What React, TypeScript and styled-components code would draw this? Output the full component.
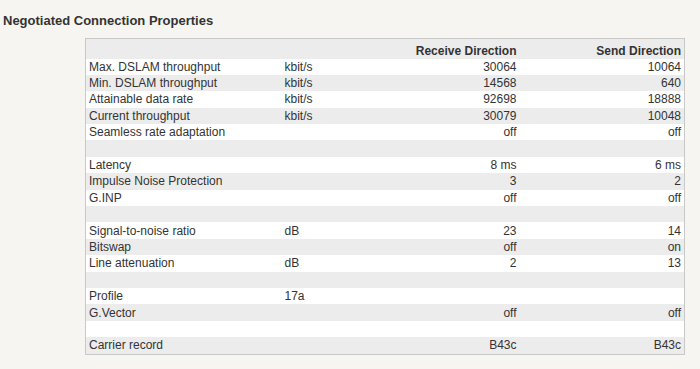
import React from 'react';
import styled, { createGlobalStyle } from 'styled-components';

const GlobalStyle = createGlobalStyle`
  html, body {
    margin: 0;
    padding: 0;
    background: #f6f5f1;
  }
  body {
    font-family: "Liberation Sans", Arial, sans-serif;
    color: #333;
  }
`;

type Row = {
  label?: string;
  unit?: string;
  receive?: string;
  send?: string;
};

const rows: Row[] = [
  { label: 'Max. DSLAM throughput', unit: 'kbit/s', receive: '30064', send: '10064' },
  { label: 'Min. DSLAM throughput', unit: 'kbit/s', receive: '14568', send: '640' },
  { label: 'Attainable data rate', unit: 'kbit/s', receive: '92698', send: '18888' },
  { label: 'Current throughput', unit: 'kbit/s', receive: '30079', send: '10048' },
  { label: 'Seamless rate adaptation', receive: 'off', send: 'off' },
  {},
  { label: 'Latency', receive: '8 ms', send: '6 ms' },
  { label: 'Impulse Noise Protection', receive: '3', send: '2' },
  { label: 'G.INP', receive: 'off', send: 'off' },
  {},
  { label: 'Signal-to-noise ratio', unit: 'dB', receive: '23', send: '14' },
  { label: 'Bitswap', receive: 'off', send: 'on' },
  { label: 'Line attenuation', unit: 'dB', receive: '2', send: '13' },
  {},
  { label: 'Profile', unit: '17a' },
  { label: 'G.Vector', receive: 'off', send: 'off' },
  {},
  { label: 'Carrier record', receive: 'B43c', send: 'B43c' },
];

const App = () => {
  return (
    <>
      <GlobalStyle />
      <Page>
        <Title>Negotiated Connection Properties</Title>
        <Table>
          <colgroup>
            <col style={{ width: 196 }} />
            <col style={{ width: 119 }} />
            <col style={{ width: 119 }} />
            <col style={{ width: 165 }} />
          </colgroup>
          <thead>
            <HeadRow>
              <HeadCell />
              <HeadCell />
              <HeadCell $right>Receive Direction</HeadCell>
              <HeadCell $right>Send Direction</HeadCell>
            </HeadRow>
          </thead>
          <tbody>
            {rows.map((r, i) => (
              <BodyRow key={i} $odd={i % 2 === 1}>
                <Cell>{r.label}</Cell>
                <Cell>{r.unit}</Cell>
                <Cell $right>{r.receive}</Cell>
                <Cell $right>{r.send}</Cell>
              </BodyRow>
            ))}
          </tbody>
        </Table>
      </Page>
    </>
  );
};

const Page = styled.div`
  width: 700px;
  height: 369px;
  padding: 13px 0 0 3px;
  box-sizing: border-box;
`;

const Title = styled.h2`
  margin: 0;
  font-size: 13px;
  font-weight: bold;
  line-height: 16px;
  color: #333;
`;

const Table = styled.table`
  margin: 9px 0 0 82px;
  width: 599px;
  table-layout: fixed;
  border-collapse: collapse;
  border: 1px solid #c8c8c6;
  font-size: 12px;
`;

const HeadRow = styled.tr`
  background: #ececec;
  height: 20px;
`;

const HeadCell = styled.th<{ $right?: boolean }>`
  padding: 4px 3px 0;
  font-weight: bold;
  text-align: ${(p) => (p.$right ? 'right' : 'left')};
  white-space: nowrap;
  line-height: 14px;
`;

const BodyRow = styled.tr<{ $odd: boolean }>`
  background: ${(p) => (p.$odd ? '#ececec' : '#ffffff')};
  height: 16.4px;
`;

const Cell = styled.td<{ $right?: boolean }>`
  padding: 0 3px;
  height: 16.4px;
  line-height: 16px;
  text-align: ${(p) => (p.$right ? 'right' : 'left')};
  white-space: nowrap;
`;

export default App;
